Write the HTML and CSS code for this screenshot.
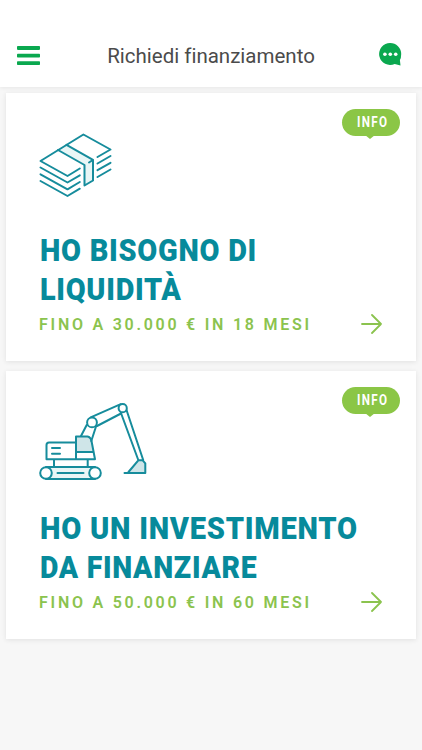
FILE: index.html
```html
<!DOCTYPE html>
<html lang="it">
<head>
<meta charset="utf-8">
<title>Richiedi finanziamento</title>
<link rel="stylesheet" href="styles.css">
</head>
<body>
<header class="topbar">
  <svg class="menu" width="24" height="20" viewBox="0 0 24 20" aria-label="Menu"><g fill="#0aa84f"><rect width="23" height="3.8" y=".1" rx=".8"/><rect width="23" height="3.8" y="7.8" rx=".8"/><rect width="23" height="3.8" y="15.2" rx=".8"/></g></svg>
  <h1 class="page-title">Richiedi finanziamento</h1>
  <svg class="chat" width="24" height="24" viewBox="0 0 24 24" aria-label="Chat"><path d="M11.2 0A11 11 0 0 1 22.2 11Q22.2 15 20.9 17L21.5 22.5 15.7 21A11 11 0 1 1 11.2 0Z" fill="#0aa84f"/><g fill="#fff"><circle cx="5.9" cy="11.3" r="1.8"/><circle cx="11.3" cy="11.3" r="1.8"/><circle cx="16.7" cy="11.3" r="1.8"/></g></svg>
</header>
<main class="cards">
  <section class="card">
    <div class="info"><span>INFO</span></div>
    <svg class="picture" width="90" height="80" viewBox="0 0 90 80">
      <path class="tint" d="M28 25 36.5 19.8 63 34.8V55.5L54.5 60.5V40Z"/>
      <path d="M49.8 43.5 37.5 51 10.5 36 53.4 9.5 80.5 24.5 67.5 32M10.5 42.5 37.5 57.5 49.8 50.3M10.5 49.3 37.5 64.3 49.8 57M10.5 56 37.5 71 49.8 63.7M67.5 38.5 80.5 31M67.5 45.2 80.5 37.8M67.5 52 80.5 44.5"/>
      <path d="M28 25 54.5 40V60.5L63 55.5V34.8L36.5 19.8M59 37.5 62 35.5"/>
    </svg>
    <h2 class="heading"><span class="line need">HO BISOGNO DI</span><span class="line liquidity">LIQUIDITÀ</span></h2>
    <div class="summary"><span>FINO A 30.000 € IN 18 MESI</span><svg class="arrow" width="22" height="20" viewBox="0 0 22 20"><path d="M2 10h19M12 1l9 9-9 9"/></svg></div>
  </section>
  <section class="card">
    <div class="info"><span>INFO</span></div>
    <svg class="picture" width="125" height="95" viewBox="0 0 125 95">
      <path class="glass" d="M46.5 41.5H58.5Q60.5 43 61.5 47L63.5 57H46.5ZM98.5 78 108.3 65.3H112.7L115.3 68.3V78Z"/>
      <path class="tint" d="M17 72.5H65V83.5H17Z"/>
      <!-- cab and tracks -->
      <path d="M46 47.5H19Q16.5 47.5 16.5 50V64.3H46M46 41.5H57.5Q60.7 42 61.5 46L65 64.3H46ZM46 57H63.5M22 53h8M22 58.7h8M24 65v7M57.7 65v7"/>
      <path d="M16 72H65M16 84H65M27.5 78H53.5"/>
      <!-- arm and bucket -->
      <path d="M56.7 30 51 41M66 31.5 61.3 46M60.7 22.3 90.7 9.2M67 31 91 18.5M90.6 17 108.3 65M96.5 15 113.2 65M94.5 78H115.3V68.3L112.7 65.3H108.3L98.5 77"/>
      <g fill="#fff"><circle cx="16" cy="78" r="5.8"/><circle cx="65" cy="78" r="5.8"/><circle cx="62" cy="27.4" r="4.9"/><circle cx="92.7" cy="13.2" r="4.1"/></g>
    </svg>
    <h2 class="heading"><span class="line invest">HO UN INVESTIMENTO</span><span class="line finance">DA FINANZIARE</span></h2>
    <div class="summary"><span>FINO A 50.000 € IN 60 MESI</span><svg class="arrow" width="22" height="20" viewBox="0 0 22 20"><path d="M2 10h19M12 1l9 9-9 9"/></svg></div>
  </section>
</main>
</body>
</html>
```
FILE: styles.css
```css
* { box-sizing: border-box; }
body { margin: 0; min-height: 750px; background: #f7f7f7; font-family: Roboto, "Liberation Sans", sans-serif; }
.topbar { height: 87px; padding: 43px 19px 0 17px; display: flex; justify-content: space-between; align-items: flex-start; background: #fff; box-shadow: 0 1px 4px #00000012; }
.menu { margin-top: 3px; }
.page-title { margin: 1px 0 0 2px; font-size: 20.5px; line-height: 24px; font-weight: 400; color: #4b4b4b; white-space: nowrap; font-variant-ligatures: none; }
.cards { padding: 6px 6px 0; display: grid; grid-template-columns: minmax(0, 1fr); gap: 10px; }
.card { position: relative; height: 268px; padding: 32px 34px 0; background: #fff; box-shadow: 0 1px 5px #00000018; }
.picture { display: block; margin-left: -10px; fill: none; stroke: #168c9c; stroke-width: 2; stroke-linecap: round; stroke-linejoin: round; }
.tint { fill: #e8f6f6; stroke: none; }
.glass { fill: #cfe5e8; stroke: none; }
.card:nth-child(2) .picture { margin-top: -8px; margin-bottom: -7px; }
.info { position: absolute; top: 16px; right: 16px; width: 58px; height: 27px; border-radius: 14px; background: #8bc646; color: #fff; font-size: 14px; font-weight: 700; line-height: 27px; letter-spacing: 1.7px; text-align: center; }
.info span { display: inline-block; transform: scaleX(.83); padding-left: 4px; }
.info::after { content: ""; position: absolute; left: 23px; top: 26px; border: 5px solid transparent; border-top: 4px solid #8bc646; border-bottom: 0; }
.heading { margin: 26px 0 0; color: #078a9b; font-size: 32px; line-height: 39px; font-weight: 900; letter-spacing: .8px; }
.line { display: block; width: max-content; transform-origin: left; white-space: nowrap; }
.need { transform: scaleX(.904); }
.liquidity { transform: scaleX(.9); }
.invest { transform: scaleX(.909); }
.finance { transform: scaleX(.888); }
.summary { height: 30px; padding-top: 1px; display: flex; justify-content: space-between; align-items: center; color: #8bc34e; font-size: 16px; line-height: 22px; font-weight: 600; letter-spacing: 2.75px; white-space: nowrap; }
.summary span { margin-left: -1px; }
.arrow { margin-top: -1px; fill: none; stroke: #8bc34e; stroke-width: 1.8; stroke-linecap: round; stroke-linejoin: round; }
```
